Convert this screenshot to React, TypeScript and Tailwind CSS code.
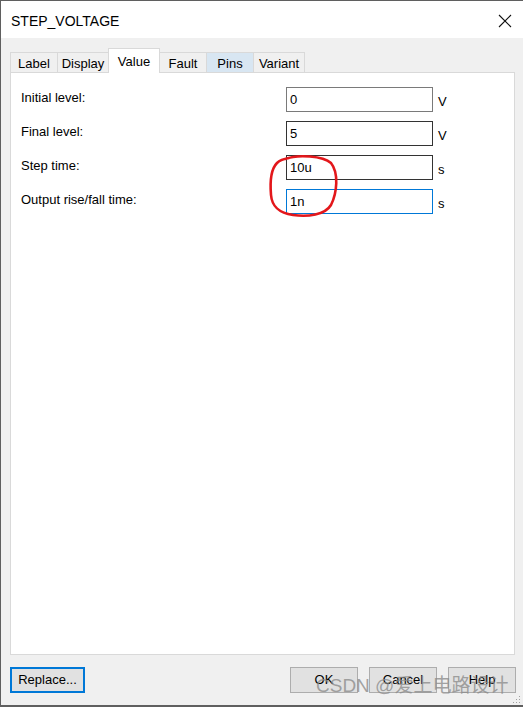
import React from "react";

const tabs = [
  { name: "Label", w: "w-[48px]" },
  { name: "Display", w: "w-[52px]" },
  { name: "Value", w: "w-[52px]", active: true },
  { name: "Fault", w: "w-[48px]" },
  { name: "Pins", w: "w-[48px]", hover: true },
  { name: "Variant", w: "w-[52px]" },
];

const rows = [
  { label: "Initial level:", value: "0", unit: "V", border: "border-[#7a7a7a]" },
  { label: "Final level:", value: "5", unit: "V", border: "border-[#333333]" },
  { label: "Step time:", value: "10u", unit: "s", border: "border-[#333333]" },
  { label: "Output rise/fall time:", value: "1n", unit: "s", border: "border-[#0078d7]" },
];

function App() {
  return (
    <div className="w-[523px] h-[707px] bg-[#f0f0f0] border-l border-t border-b-2 border-[#5f5f5f] flex flex-col relative text-black [font-family:'Liberation_Sans',Arial,sans-serif]">
      {/* title bar */}
      <div className="h-[37px] bg-white flex items-center justify-between pl-[10px] pr-[11px]">
        <span className="text-[14px] leading-none pt-[2px]">STEP_VOLTAGE</span>
        <svg width="14" height="14" viewBox="0 0 14 14" className="mt-[2px]">
          <path d="M1 1 L13 13 M13 1 L1 13" stroke="#111" strokeWidth="1.1" />
        </svg>
      </div>

      {/* body */}
      <div className="flex-1 flex flex-col pl-[9px] pt-[10px]">
        {/* tabs */}
        <div className="flex items-end h-[24px] pl-[1px] relative z-10">
          {tabs.map((t) => (
            <div
              key={t.name}
              className={
                t.active
                  ? `${t.w} h-[25px] -mb-[1px] -ml-[1px] bg-white border border-b-0 border-[#d9d9d9] text-[13px] flex items-start pt-[3px] justify-center`
                  : `${t.w} h-[20px] -ml-[1px] border border-b-0 border-[#d9d9d9] text-[13px] flex items-center justify-center pt-[2px] ${t.hover ? "bg-[#d8e6f2]" : "bg-[#f0f0f0]"}`
              }
            >
              {t.name}
            </div>
          ))}
        </div>

        {/* panel */}
        <div className="w-[505px] h-[583px] bg-white border border-[#d9d9d9] pt-[14px] pl-[10px] flex flex-col gap-[9px]">
          {rows.map((r) => (
            <div key={r.label} className="flex items-center h-[25px] text-[13px]">
              <span className="w-[265px] pb-[4px]">{r.label}</span>
              <div className={`w-[147px] h-[25px] border ${r.border} flex items-center pl-[3px] pt-[1px]`}>
                {r.value}
              </div>
              <span className="ml-[5px] text-[13px] pt-[4px]">{r.unit}</span>
            </div>
          ))}
        </div>

        {/* buttons */}
        <div className="flex items-center mt-[12px] pr-[7px]">
          <button className="w-[75px] h-[26px] bg-[#e1e1e1] border-2 border-[#0078d7] text-[13px] flex items-center justify-center">
            Replace...
          </button>
          <div className="flex-1" />
          <div className="flex gap-[11px]">
            {["OK", "Cancel", "Help"].map((b) => (
              <button
                key={b}
                className="w-[68px] h-[26px] bg-[#e1e1e1] border border-[#adadad] text-[13px] flex items-center justify-center"
              >
                {b}
              </button>
            ))}
          </div>
        </div>
      </div>

      {/* resize grip */}
      <svg width="8" height="8" viewBox="0 0 8 8" className="absolute right-[2px] bottom-[1px]">
        <rect x="6" y="0" width="1" height="1" fill="#a0a0a0" />
        <rect x="3" y="3" width="1" height="1" fill="#a0a0a0" />
        <rect x="6" y="3" width="1" height="1" fill="#a0a0a0" />
        <rect x="0" y="6" width="1" height="1" fill="#a0a0a0" />
        <rect x="3" y="6" width="1" height="1" fill="#a0a0a0" />
        <rect x="6" y="6" width="1" height="1" fill="#a0a0a0" />
      </svg>

      {/* red hand-drawn circle */}
      <svg width="80" height="70" viewBox="0 0 80 70" className="absolute left-[262px] top-[150px] pointer-events-none">
        <path
          d="M22 8 C35 3, 60 5, 68 12 C76 22, 74 42, 68 54 C62 64, 45 66, 30 64 C16 62, 9 56, 8 44 C7 32, 8 18, 14 12 C17 9, 20 8, 26 7"
          fill="none"
          stroke="#e3171b"
          strokeWidth="2.6"
          strokeLinecap="round"
        />
      </svg>

      {/* watermark */}
      <div className="absolute left-[315px] top-[675px] text-[19px] leading-none text-[#8c8c8c]/80 pointer-events-none whitespace-nowrap [font-family:'Liberation_Sans','Noto_Sans_CJK_SC',sans-serif]">
        CSDN @爱上电路设计
      </div>
    </div>
  );
}

export default App;
